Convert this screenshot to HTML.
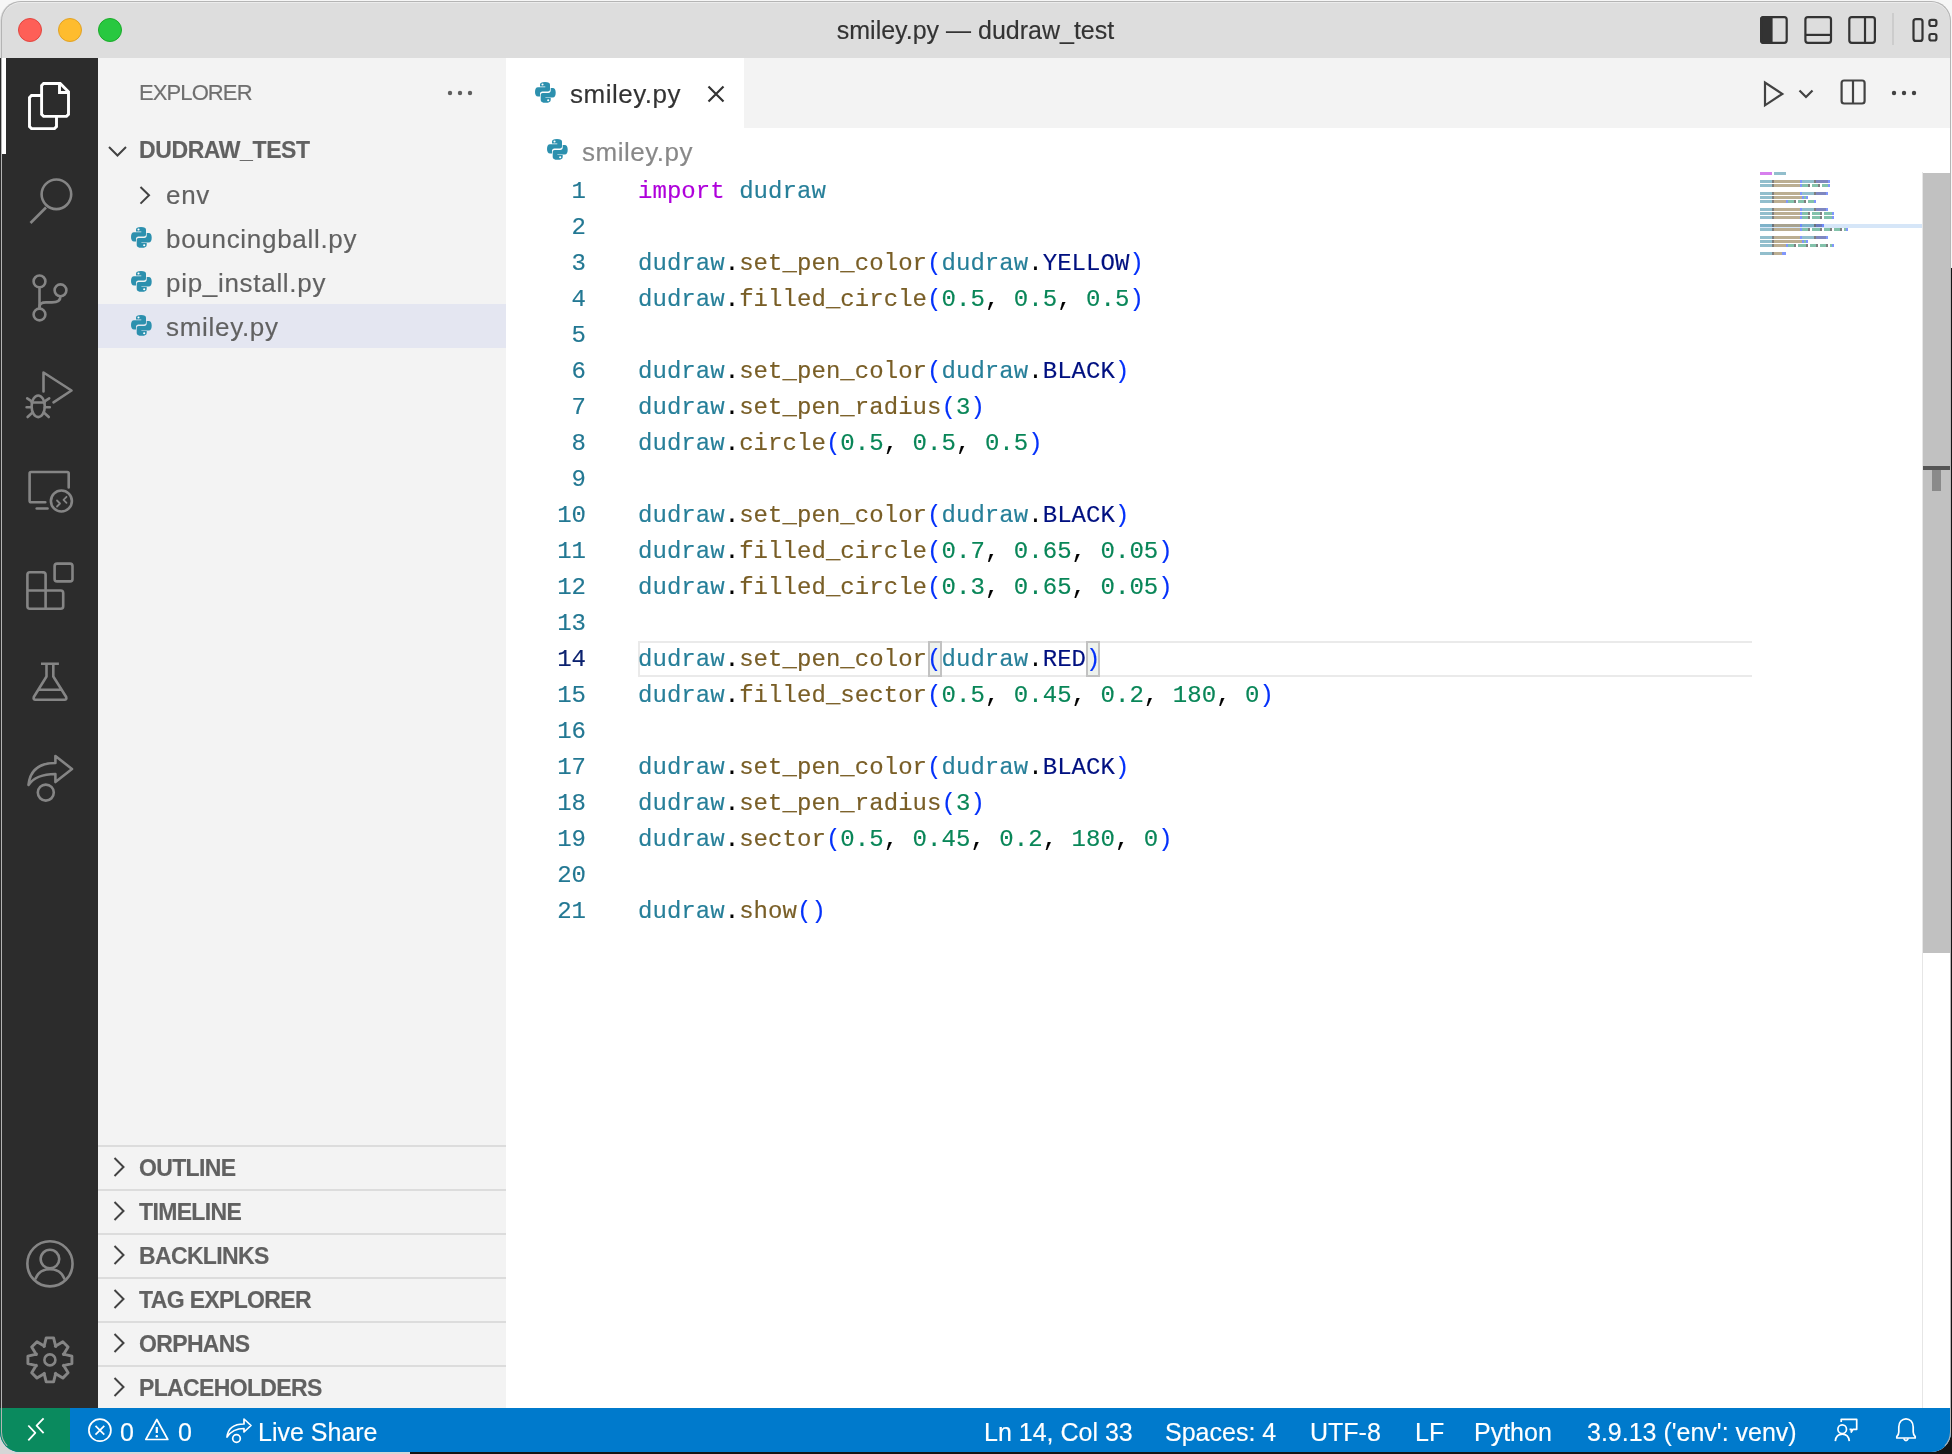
<!DOCTYPE html>
<html><head><meta charset="utf-8"><style>
*{margin:0;padding:0;box-sizing:border-box}
html,body{width:1952px;height:1454px;overflow:hidden;background:#f6f6f6;font-family:"Liberation Sans",sans-serif}
#win *{-webkit-text-stroke:0.15px currentColor}
.abs{position:absolute}
#bgbl{position:absolute;left:0;top:1380px;width:410px;height:74px;background:#d6d6d6}
#bgbr{position:absolute;left:410px;top:268px;width:1542px;height:1186px;background:#151515}
#win{will-change:transform;position:absolute;left:0;top:1px;width:1951px;height:1451px;border-radius:20px;overflow:hidden;background:#fff}
#wborder{position:absolute;left:1px;top:1px;width:1950px;height:1451px;border-radius:20px;border:1.2px solid #b4b4b4;border-bottom-color:transparent;box-shadow:inset 0 1px 0 rgba(255,255,255,0.45)}
#title{position:absolute;left:0;top:0;width:1951px;height:57px;background:#dddddd}
#title .t{position:absolute;left:0;width:1951px;top:15px;text-align:center;font-size:25px;color:#333;line-height:29px}
.dot{position:absolute;width:24px;height:24px;border-radius:50%;top:17px}
#act{position:absolute;left:0;top:57px;width:98px;height:1350px;background:#2c2c2c}
#side{position:absolute;left:98px;top:57px;width:408px;height:1350px;background:#f3f3f3}
#editor{position:absolute;left:506px;top:57px;width:1445px;height:1350px;background:#fff}
#tabs{position:absolute;left:0;top:0;width:1445px;height:70px;background:#f3f3f3}
#status{position:absolute;left:0;top:1407px;width:1951px;height:44px;background:#007acc;color:#fff;font-size:25px}
.code{position:absolute;left:132px;top:116px;letter-spacing:0.05px;-webkit-text-stroke:0.2px currentColor;font-family:"Liberation Mono",monospace;font-size:24px;line-height:36px;white-space:pre;color:#000}
.ln{position:absolute;left:19px;top:116px;-webkit-text-stroke:0.2px currentColor;width:61px;font-family:"Liberation Mono",monospace;font-size:24px;line-height:36px;color:#237893;text-align:right;white-space:pre}
.kw{color:#af00db}.md{color:#267f99}.fn{color:#795e26}.br{color:#0431fa}.nu{color:#098658}.cn{color:#001080}.pu{color:#000}
.row{position:absolute;left:0;width:408px;height:44px;font-size:26px;letter-spacing:0.7px;color:#616161;line-height:46px}
.sec{position:absolute;left:0;width:408px;height:44px;border-top:2px solid #dcdcdc;font-size:23px;letter-spacing:-0.65px;font-weight:bold;color:#616161;line-height:42px}
.sb{position:absolute;top:2px;line-height:44px;white-space:pre}
svg.ov{position:absolute;left:0;top:0;width:1952px;height:1454px;overflow:visible}
</style></head><body>
<div id="bgbl"></div>
<div id="bgbr"></div>
<div id="win">
  <div id="title">
    <div class="dot" style="left:18px;background:#fe5f57;border:1px solid #e14640"></div>
    <div class="dot" style="left:58px;background:#febc2e;border:1px solid #e0a226"></div>
    <div class="dot" style="left:98px;background:#28c840;border:1px solid #1aab29"></div>
    <div class="t">smiley.py — dudraw_test</div>
  </div>
  <div id="act"></div>
  <div class="abs" style="left:2px;top:57px;width:4px;height:96px;background:#fff"></div>
  <div id="side">
    <div class="abs" style="left:41px;top:23px;font-size:22px;letter-spacing:-0.9px;line-height:24px;color:#6f6f6f">EXPLORER</div>
    <div class="row" style="top:70px;font-weight:bold;font-size:23px;letter-spacing:-0.4px;line-height:44px"><span class="abs" style="left:41px">DUDRAW_TEST</span></div>
    <div class="row" style="top:114px"><span class="abs" style="left:68px">env</span></div>
    <div class="row" style="top:158px"><span class="abs" style="left:68px">bouncingball.py</span></div>
    <div class="row" style="top:202px"><span class="abs" style="left:68px">pip_install.py</span></div>
    <div class="row" style="top:246px;background:#e4e6f1"><span class="abs" style="left:68px">smiley.py</span></div>
    <div class="sec" style="top:1087px"><span class="abs" style="left:41px">OUTLINE</span></div>
    <div class="sec" style="top:1131px"><span class="abs" style="left:41px">TIMELINE</span></div>
    <div class="sec" style="top:1175px"><span class="abs" style="left:41px">BACKLINKS</span></div>
    <div class="sec" style="top:1219px"><span class="abs" style="left:41px">TAG EXPLORER</span></div>
    <div class="sec" style="top:1263px"><span class="abs" style="left:41px">ORPHANS</span></div>
    <div class="sec" style="top:1307px"><span class="abs" style="left:41px">PLACEHOLDERS</span></div>
  </div>
  <div id="editor">
    <div id="tabs">
      <div class="abs" style="left:0;top:0;width:238px;height:71px;background:#fff"></div>
      <div class="abs" style="left:64px;top:21px;font-size:26px;line-height:30px;letter-spacing:0.5px;color:#333">smiley.py</div>
    </div>
    <div class="abs" style="left:76px;top:79px;font-size:26px;line-height:30px;letter-spacing:0.5px;color:#888">smiley.py</div>
    <div class="abs" style="left:132px;top:583px;width:1114px;height:36px;border:2px solid #eaeaea;border-right:none"></div>
    <div class="abs" style="left:422px;top:583px;width:14px;height:36px;background:#eef2ee;border:2px solid #c2c2c2"></div>
    <div class="abs" style="left:580px;top:583px;width:14px;height:36px;background:#eef2ee;border:2px solid #c2c2c2"></div>
    <div class="ln">1
2
3
4
5
6
7
8
9
10
11
12
13
<span style="color:#0b216f">14</span>
15
16
17
18
19
20
21</div>
    <div class="code"><span class="kw">import</span> <span class="md">dudraw</span>

<span class="md">dudraw</span><span class="pu">.</span><span class="fn">set_pen_color</span><span class="br">(</span><span class="md">dudraw</span><span class="pu">.</span><span class="cn">YELLOW</span><span class="br">)</span>
<span class="md">dudraw</span><span class="pu">.</span><span class="fn">filled_circle</span><span class="br">(</span><span class="nu">0.5</span><span class="pu">, </span><span class="nu">0.5</span><span class="pu">, </span><span class="nu">0.5</span><span class="br">)</span>

<span class="md">dudraw</span><span class="pu">.</span><span class="fn">set_pen_color</span><span class="br">(</span><span class="md">dudraw</span><span class="pu">.</span><span class="cn">BLACK</span><span class="br">)</span>
<span class="md">dudraw</span><span class="pu">.</span><span class="fn">set_pen_radius</span><span class="br">(</span><span class="nu">3</span><span class="br">)</span>
<span class="md">dudraw</span><span class="pu">.</span><span class="fn">circle</span><span class="br">(</span><span class="nu">0.5</span><span class="pu">, </span><span class="nu">0.5</span><span class="pu">, </span><span class="nu">0.5</span><span class="br">)</span>

<span class="md">dudraw</span><span class="pu">.</span><span class="fn">set_pen_color</span><span class="br">(</span><span class="md">dudraw</span><span class="pu">.</span><span class="cn">BLACK</span><span class="br">)</span>
<span class="md">dudraw</span><span class="pu">.</span><span class="fn">filled_circle</span><span class="br">(</span><span class="nu">0.7</span><span class="pu">, </span><span class="nu">0.65</span><span class="pu">, </span><span class="nu">0.05</span><span class="br">)</span>
<span class="md">dudraw</span><span class="pu">.</span><span class="fn">filled_circle</span><span class="br">(</span><span class="nu">0.3</span><span class="pu">, </span><span class="nu">0.65</span><span class="pu">, </span><span class="nu">0.05</span><span class="br">)</span>

<span class="md">dudraw</span><span class="pu">.</span><span class="fn">set_pen_color</span><span class="br">(</span><span class="md">dudraw</span><span class="pu">.</span><span class="cn">RED</span><span class="br">)</span>
<span class="md">dudraw</span><span class="pu">.</span><span class="fn">filled_sector</span><span class="br">(</span><span class="nu">0.5</span><span class="pu">, </span><span class="nu">0.45</span><span class="pu">, </span><span class="nu">0.2</span><span class="pu">, </span><span class="nu">180</span><span class="pu">, </span><span class="nu">0</span><span class="br">)</span>

<span class="md">dudraw</span><span class="pu">.</span><span class="fn">set_pen_color</span><span class="br">(</span><span class="md">dudraw</span><span class="pu">.</span><span class="cn">BLACK</span><span class="br">)</span>
<span class="md">dudraw</span><span class="pu">.</span><span class="fn">set_pen_radius</span><span class="br">(</span><span class="nu">3</span><span class="br">)</span>
<span class="md">dudraw</span><span class="pu">.</span><span class="fn">sector</span><span class="br">(</span><span class="nu">0.5</span><span class="pu">, </span><span class="nu">0.45</span><span class="pu">, </span><span class="nu">0.2</span><span class="pu">, </span><span class="nu">180</span><span class="pu">, </span><span class="nu">0</span><span class="br">)</span>

<span class="md">dudraw</span><span class="pu">.</span><span class="fn">show</span><span class="br">()</span></div>
    <div class="abs" style="left:1254px;top:166px;width:162px;height:4px;background:#d6e6f8"></div>
    <div class="abs" style="left:1416px;top:115px;width:28px;height:780px;background:#c1c1c1;border-left:1px solid #b5b5b5"></div>
    <div class="abs" style="left:1416px;top:408px;width:28px;height:4px;background:#555"></div>
    <div class="abs" style="left:1426px;top:412px;width:9px;height:21px;background:#8a8a8a"></div>
  </div>
  <div id="status">
    <div class="abs" style="left:0;top:0;width:70px;height:44px;background:#0a8a5e"></div>
    <span class="sb" style="left:120px">0</span>
    <span class="sb" style="left:178px">0</span>
    <span class="sb" style="left:258px">Live Share</span>
    <span class="sb" style="left:984px">Ln 14, Col 33</span>
    <span class="sb" style="left:1165px">Spaces: 4</span>
    <span class="sb" style="left:1310px">UTF-8</span>
    <span class="sb" style="left:1415px">LF</span>
    <span class="sb" style="left:1474px">Python</span>
    <span class="sb" style="left:1587px">3.9.13 ('env': venv)</span>
  </div>
  <div class="abs" style="left:1922px;top:171px;width:1px;height:1236px;background:#e6e6e6"></div>
</div>
<div id="wborder"></div>
<svg class="ov" width="1952" height="1454" viewBox="0 0 1952 1454">
<defs>
<g id="py">
<path id="pys" d="M5,2.8 C5,0.9 6.5,0 10,0 C13.5,0 15,0.9 15,2.8 L15,7.6 C15,8.8 14.2,9.6 13,9.6 L7.4,9.6 C5.9,9.6 5,10.6 5,12.1 L5,14.6 L3,14.6 C1,14.6 0,12.5 0,10 C0,7 1,5.2 3,5.2 L10.3,5.2 L10.3,4.6 L5,4.6 Z"/>
<use href="#pys" transform="rotate(180 10.35 10.35)"/>
<circle cx="7.5" cy="2.5" r="1.05" fill="#fff"/>
<circle cx="13.2" cy="18.2" r="1.05" fill="#fff"/>
</g>
</defs>
<!-- activity bar -->
<g fill="none" stroke="#fff" stroke-width="2.9" stroke-linejoin="miter">
<path d="M41.6,95.5 L31.5,95.5 L29.5,97.5 L29.5,126.6 L31.5,128.6 L54.5,128.6 L56.5,126.6 L56.5,116.4"/>
<path d="M43.6,83.5 L60.2,83.5 L68.5,91.8 L68.5,114.4 L66.5,116.4 L43.6,116.4 L41.6,114.4 L41.6,85.5 Z"/>
<path d="M59.5,83.5 L59.5,92.5 L68.5,92.5"/>
</g>
<g fill="none" stroke="#858585" stroke-width="2.6" stroke-linejoin="round" stroke-linecap="round">
<circle cx="56.4" cy="194.3" r="14.8"/>
<path d="M30.5,223 L46,207.5" stroke-linecap="butt"/>
<circle cx="39.5" cy="281.4" r="5.9"/>
<circle cx="60.5" cy="290.3" r="5.9"/>
<circle cx="39.5" cy="314.5" r="5.9"/>
<path d="M39.5,287.3 L39.5,308.6"/>
<path d="M60.5,296.2 C60.5,300.5 57,302.4 52,302.4 L46,302.4 C42,302.4 39.5,304 39.5,307"/>
<path d="M43.5,391.5 L43.5,372.5 L71.5,390.5 L53.5,402.3"/>
<ellipse cx="38.2" cy="406.3" rx="6.6" ry="10.8"/>
<path d="M31.8,402.5 L44.6,402.5"/>
<path d="M27.2,398.3 L31.8,401.3 M49.2,398.3 L44.6,401.3 M26.6,407.2 L31.6,407.2 M49.8,407.2 L44.8,407.2 M27.6,417 L32,413 M48.8,417 L44.4,413"/>
<path d="M68.7,487.5 L68.7,473.5 Q68.7,472 67.2,472 L31.1,472 Q29.6,472 29.6,473.5 L29.6,500.8 Q29.6,502.3 31.1,502.3 L45.3,502.3"/>
<path d="M36.7,508.5 L47.5,508.5"/>
<circle cx="61.4" cy="501" r="10.5"/>
<path d="M57,500.5 L60,503.5 L57,506.5 M66.5,496.8 L63.5,499.8 L66.5,502.8" stroke-width="1.8"/>
<path d="M43.1,572.3 L29.9,572.3 Q27.4,572.3 27.4,574.8 L27.4,606.2 Q27.4,608.7 29.9,608.7 L60.7,608.7 Q63.2,608.7 63.2,606.2 L63.2,593 Q63.2,590.5 60.7,590.5 L27.4,590.5"/>
<path d="M43.1,572.3 Q45.6,572.3 45.6,574.8 L45.6,608.7"/>
<rect x="54.6" y="563.6" width="17.9" height="17.8" rx="2.5"/>
<path d="M41,663.8 L58.9,663.8 M46.5,663.8 L46.5,676.5 L33.8,697 Q33,699.7 35.5,699.7 L64.5,699.7 Q67,699.7 66.2,697 L53.3,676.5 L53.3,663.8 M38.5,689.8 L61.5,689.8" stroke-linecap="butt"/>
<path d="M28.5,785 C30,770 40,763 55.4,763 L55.4,756 L72,769 L55.4,782 L55.4,774 C42,774 34,777 28.5,785 Z"/>
<circle cx="45.8" cy="792.6" r="8"/>
<circle cx="49.95" cy="1263.8" r="22.6"/>
<circle cx="49.95" cy="1259.1" r="9.3"/>
<path d="M35.6,1278.5 C38,1272.5 43.5,1269.3 49.95,1269.3 C56.4,1269.3 61.9,1272.5 64.3,1278.5"/>
<path d="M44.1,1346.5 L46.2,1337.9 L53.6,1337.9 L55.7,1346.5 L55.3,1346.3 L62.8,1341.7 L68.1,1347.0 L63.5,1354.5 L63.3,1354.1 L71.9,1356.2 L71.9,1363.6 L63.3,1365.7 L63.5,1365.3 L68.1,1372.8 L62.8,1378.1 L55.3,1373.5 L55.7,1373.3 L53.6,1381.9 L46.2,1381.9 L44.1,1373.3 L44.5,1373.5 L37.0,1378.1 L31.7,1372.8 L36.3,1365.3 L36.5,1365.7 L27.9,1363.6 L27.9,1356.2 L36.5,1354.1 L36.3,1354.5 L31.7,1347.0 L37.0,1341.7 L44.5,1346.3Z" stroke-linejoin="round" stroke-width="2.9"/>
<circle cx="49.9" cy="1359.9" r="5.5"/>
</g>
<!-- sidebar -->
<g fill="none" stroke="#424242" stroke-width="2" stroke-linecap="butt">
<path d="M109,147 L117.5,155.5 L126,147"/>
<path d="M140.5,187 L149,195.3 L140.5,203.6"/>
<path d="M114.5,1158 L123.5,1167 L114.5,1176"/>
<path d="M114.5,1202 L123.5,1211 L114.5,1220"/>
<path d="M114.5,1246 L123.5,1255 L114.5,1264"/>
<path d="M114.5,1290 L123.5,1299 L114.5,1308"/>
<path d="M114.5,1334 L123.5,1343 L114.5,1352"/>
<path d="M114.5,1378 L123.5,1387 L114.5,1396"/>
</g>
<g fill="#5f5f5f"><circle cx="450" cy="93" r="2.2"/><circle cx="460" cy="93" r="2.2"/><circle cx="470" cy="93" r="2.2"/></g>
<g fill="#2c90ae">
<use href="#py" transform="translate(131,227)"/>
<use href="#py" transform="translate(131,271)"/>
<use href="#py" transform="translate(131,315)"/>
<use href="#py" transform="translate(535,82)"/>
<use href="#py" transform="translate(547,139)"/>
</g>
<!-- tab close -->
<path d="M708.5,86.5 L723.5,101.5 M723.5,86.5 L708.5,101.5" stroke="#333" stroke-width="2.2" fill="none"/>
<!-- title bar icons -->
<g fill="none" stroke="#333" stroke-width="2.2" stroke-linejoin="round">
<rect x="1761.1" y="17.2" width="25.6" height="25.6" rx="2.5"/>
<path d="M1761.1,19.7 Q1761.1,17.2 1763.6,17.2 L1771.5,17.2 L1771.5,42.8 L1763.6,42.8 Q1761.1,42.8 1761.1,40.3 Z" fill="#333"/>
<rect x="1805.4" y="17.2" width="25.6" height="25.6" rx="2.5"/>
<path d="M1805.4,34.9 L1831,34.9"/>
<rect x="1849.3" y="17.2" width="25.6" height="25.6" rx="2.5"/>
<path d="M1865,17.2 L1865,42.8"/>
<rect x="1913.5" y="19.1" width="9" height="21.8" rx="2.5"/>
<rect x="1929.4" y="19.8" width="7" height="6.2" rx="2"/>
<rect x="1929.4" y="34" width="7" height="6.5" rx="2"/>
</g>
<path d="M1893,13 L1893,45" stroke="#c6c6c6" stroke-width="1.5"/>
<!-- editor actions -->
<g fill="none" stroke="#424242" stroke-width="2.2" stroke-linejoin="miter">
<path d="M1765,82.5 L1765,105.3 L1782.3,93.9 Z"/>
<path d="M1799.5,90.5 L1806,97 L1812.5,90.5"/>
<rect x="1841.6" y="80.5" width="23" height="23" rx="2.5"/>
<path d="M1853,80.5 L1853,103.5"/>
</g>
<g fill="#424242"><circle cx="1894" cy="93" r="2.2"/><circle cx="1904" cy="93" r="2.2"/><circle cx="1914" cy="93" r="2.2"/></g>
<!-- minimap -->
<g opacity="0.5">
<rect x="1760" y="172" width="12" height="3" fill="#af00db"/>
<rect x="1774" y="172" width="12" height="3" fill="#267f99"/>
<rect x="1760" y="180" width="12" height="3" fill="#267f99"/>
<rect x="1772" y="180" width="2" height="3" fill="#000000"/>
<rect x="1774" y="180" width="26" height="3" fill="#795e26"/>
<rect x="1800" y="180" width="2" height="3" fill="#0431fa"/>
<rect x="1802" y="180" width="12" height="3" fill="#267f99"/>
<rect x="1814" y="180" width="2" height="3" fill="#000000"/>
<rect x="1816" y="180" width="12" height="3" fill="#001080"/>
<rect x="1828" y="180" width="2" height="3" fill="#0431fa"/>
<rect x="1760" y="184" width="12" height="3" fill="#267f99"/>
<rect x="1772" y="184" width="2" height="3" fill="#000000"/>
<rect x="1774" y="184" width="26" height="3" fill="#795e26"/>
<rect x="1800" y="184" width="2" height="3" fill="#0431fa"/>
<rect x="1802" y="184" width="6" height="3" fill="#098658"/>
<rect x="1808" y="184" width="2" height="3" fill="#000000"/>
<rect x="1812" y="184" width="6" height="3" fill="#098658"/>
<rect x="1818" y="184" width="2" height="3" fill="#000000"/>
<rect x="1822" y="184" width="6" height="3" fill="#098658"/>
<rect x="1828" y="184" width="2" height="3" fill="#0431fa"/>
<rect x="1760" y="192" width="12" height="3" fill="#267f99"/>
<rect x="1772" y="192" width="2" height="3" fill="#000000"/>
<rect x="1774" y="192" width="26" height="3" fill="#795e26"/>
<rect x="1800" y="192" width="2" height="3" fill="#0431fa"/>
<rect x="1802" y="192" width="12" height="3" fill="#267f99"/>
<rect x="1814" y="192" width="2" height="3" fill="#000000"/>
<rect x="1816" y="192" width="10" height="3" fill="#001080"/>
<rect x="1826" y="192" width="2" height="3" fill="#0431fa"/>
<rect x="1760" y="196" width="12" height="3" fill="#267f99"/>
<rect x="1772" y="196" width="2" height="3" fill="#000000"/>
<rect x="1774" y="196" width="28" height="3" fill="#795e26"/>
<rect x="1802" y="196" width="2" height="3" fill="#0431fa"/>
<rect x="1804" y="196" width="2" height="3" fill="#098658"/>
<rect x="1806" y="196" width="2" height="3" fill="#0431fa"/>
<rect x="1760" y="200" width="12" height="3" fill="#267f99"/>
<rect x="1772" y="200" width="2" height="3" fill="#000000"/>
<rect x="1774" y="200" width="12" height="3" fill="#795e26"/>
<rect x="1786" y="200" width="2" height="3" fill="#0431fa"/>
<rect x="1788" y="200" width="6" height="3" fill="#098658"/>
<rect x="1794" y="200" width="2" height="3" fill="#000000"/>
<rect x="1798" y="200" width="6" height="3" fill="#098658"/>
<rect x="1804" y="200" width="2" height="3" fill="#000000"/>
<rect x="1808" y="200" width="6" height="3" fill="#098658"/>
<rect x="1814" y="200" width="2" height="3" fill="#0431fa"/>
<rect x="1760" y="208" width="12" height="3" fill="#267f99"/>
<rect x="1772" y="208" width="2" height="3" fill="#000000"/>
<rect x="1774" y="208" width="26" height="3" fill="#795e26"/>
<rect x="1800" y="208" width="2" height="3" fill="#0431fa"/>
<rect x="1802" y="208" width="12" height="3" fill="#267f99"/>
<rect x="1814" y="208" width="2" height="3" fill="#000000"/>
<rect x="1816" y="208" width="10" height="3" fill="#001080"/>
<rect x="1826" y="208" width="2" height="3" fill="#0431fa"/>
<rect x="1760" y="212" width="12" height="3" fill="#267f99"/>
<rect x="1772" y="212" width="2" height="3" fill="#000000"/>
<rect x="1774" y="212" width="26" height="3" fill="#795e26"/>
<rect x="1800" y="212" width="2" height="3" fill="#0431fa"/>
<rect x="1802" y="212" width="6" height="3" fill="#098658"/>
<rect x="1808" y="212" width="2" height="3" fill="#000000"/>
<rect x="1812" y="212" width="8" height="3" fill="#098658"/>
<rect x="1820" y="212" width="2" height="3" fill="#000000"/>
<rect x="1824" y="212" width="8" height="3" fill="#098658"/>
<rect x="1832" y="212" width="2" height="3" fill="#0431fa"/>
<rect x="1760" y="216" width="12" height="3" fill="#267f99"/>
<rect x="1772" y="216" width="2" height="3" fill="#000000"/>
<rect x="1774" y="216" width="26" height="3" fill="#795e26"/>
<rect x="1800" y="216" width="2" height="3" fill="#0431fa"/>
<rect x="1802" y="216" width="6" height="3" fill="#098658"/>
<rect x="1808" y="216" width="2" height="3" fill="#000000"/>
<rect x="1812" y="216" width="8" height="3" fill="#098658"/>
<rect x="1820" y="216" width="2" height="3" fill="#000000"/>
<rect x="1824" y="216" width="8" height="3" fill="#098658"/>
<rect x="1832" y="216" width="2" height="3" fill="#0431fa"/>
<rect x="1760" y="224" width="12" height="3" fill="#267f99"/>
<rect x="1772" y="224" width="2" height="3" fill="#000000"/>
<rect x="1774" y="224" width="26" height="3" fill="#795e26"/>
<rect x="1800" y="224" width="2" height="3" fill="#0431fa"/>
<rect x="1802" y="224" width="12" height="3" fill="#267f99"/>
<rect x="1814" y="224" width="2" height="3" fill="#000000"/>
<rect x="1816" y="224" width="6" height="3" fill="#001080"/>
<rect x="1822" y="224" width="2" height="3" fill="#0431fa"/>
<rect x="1760" y="228" width="12" height="3" fill="#267f99"/>
<rect x="1772" y="228" width="2" height="3" fill="#000000"/>
<rect x="1774" y="228" width="26" height="3" fill="#795e26"/>
<rect x="1800" y="228" width="2" height="3" fill="#0431fa"/>
<rect x="1802" y="228" width="6" height="3" fill="#098658"/>
<rect x="1808" y="228" width="2" height="3" fill="#000000"/>
<rect x="1812" y="228" width="8" height="3" fill="#098658"/>
<rect x="1820" y="228" width="2" height="3" fill="#000000"/>
<rect x="1824" y="228" width="6" height="3" fill="#098658"/>
<rect x="1830" y="228" width="2" height="3" fill="#000000"/>
<rect x="1834" y="228" width="6" height="3" fill="#098658"/>
<rect x="1840" y="228" width="2" height="3" fill="#000000"/>
<rect x="1844" y="228" width="2" height="3" fill="#098658"/>
<rect x="1846" y="228" width="2" height="3" fill="#0431fa"/>
<rect x="1760" y="236" width="12" height="3" fill="#267f99"/>
<rect x="1772" y="236" width="2" height="3" fill="#000000"/>
<rect x="1774" y="236" width="26" height="3" fill="#795e26"/>
<rect x="1800" y="236" width="2" height="3" fill="#0431fa"/>
<rect x="1802" y="236" width="12" height="3" fill="#267f99"/>
<rect x="1814" y="236" width="2" height="3" fill="#000000"/>
<rect x="1816" y="236" width="10" height="3" fill="#001080"/>
<rect x="1826" y="236" width="2" height="3" fill="#0431fa"/>
<rect x="1760" y="240" width="12" height="3" fill="#267f99"/>
<rect x="1772" y="240" width="2" height="3" fill="#000000"/>
<rect x="1774" y="240" width="28" height="3" fill="#795e26"/>
<rect x="1802" y="240" width="2" height="3" fill="#0431fa"/>
<rect x="1804" y="240" width="2" height="3" fill="#098658"/>
<rect x="1806" y="240" width="2" height="3" fill="#0431fa"/>
<rect x="1760" y="244" width="12" height="3" fill="#267f99"/>
<rect x="1772" y="244" width="2" height="3" fill="#000000"/>
<rect x="1774" y="244" width="12" height="3" fill="#795e26"/>
<rect x="1786" y="244" width="2" height="3" fill="#0431fa"/>
<rect x="1788" y="244" width="6" height="3" fill="#098658"/>
<rect x="1794" y="244" width="2" height="3" fill="#000000"/>
<rect x="1798" y="244" width="8" height="3" fill="#098658"/>
<rect x="1806" y="244" width="2" height="3" fill="#000000"/>
<rect x="1810" y="244" width="6" height="3" fill="#098658"/>
<rect x="1816" y="244" width="2" height="3" fill="#000000"/>
<rect x="1820" y="244" width="6" height="3" fill="#098658"/>
<rect x="1826" y="244" width="2" height="3" fill="#000000"/>
<rect x="1830" y="244" width="2" height="3" fill="#098658"/>
<rect x="1832" y="244" width="2" height="3" fill="#0431fa"/>
<rect x="1760" y="252" width="12" height="3" fill="#267f99"/>
<rect x="1772" y="252" width="2" height="3" fill="#000000"/>
<rect x="1774" y="252" width="8" height="3" fill="#795e26"/>
<rect x="1782" y="252" width="4" height="3" fill="#0431fa"/>
</g>
<!-- status bar icons -->
<g fill="none" stroke="#fff" stroke-width="1.7" stroke-linejoin="round">
<path d="M28.3,1425.5 L35.3,1432.9 L28.3,1440.4 M43.6,1418.3 L36.6,1425.7 L43.6,1433.2" stroke-width="1.8"/>
<circle cx="99.9" cy="1430.2" r="11"/>
<path d="M95.5,1425.8 L104.3,1434.6 M104.3,1425.8 L95.5,1434.6"/>
<path d="M156.8,1419.5 L145.8,1439.5 L167.8,1439.5 Z"/>
<path d="M156.8,1427 L156.8,1433" stroke-width="2.2"/>
<path d="M227,1437 C228,1428 234,1424 244,1424 L244,1419 L251,1425.5 L244,1432 L244,1428.5 C236,1428.5 231,1431 227,1437 Z"/>
<circle cx="236.5" cy="1438.5" r="3.8"/>
<circle cx="1842.2" cy="1429.2" r="4.3"/>
<path d="M1835.3,1441.2 C1835.8,1436.6 1838.6,1434.2 1842.3,1434.2 C1846,1434.2 1848.8,1436.6 1849.3,1441.2"/>
<path d="M1841.2,1422 L1841.2,1419.3 L1856.7,1419.3 L1856.7,1429.3 L1853,1429.3 L1851.3,1432 L1851.3,1429.3 L1849.5,1429.3"/>
<path d="M1896.8,1438 L1896.8,1436.6 C1898,1435.3 1898.8,1434 1898.8,1432 L1898.8,1427 C1898.8,1422 1902,1418.8 1906,1418.8 C1910,1418.8 1913.2,1422 1913.2,1427 L1913.2,1432 C1913.2,1434 1914,1435.3 1915.2,1436.6 L1915.2,1438 Z"/>
<path d="M1903.6,1438.4 Q1906,1442.8 1908.4,1438.4"/>
</g>
<g fill="#fff"><circle cx="156.8" cy="1436.2" r="1.2"/></g>
</svg>

</body></html>
